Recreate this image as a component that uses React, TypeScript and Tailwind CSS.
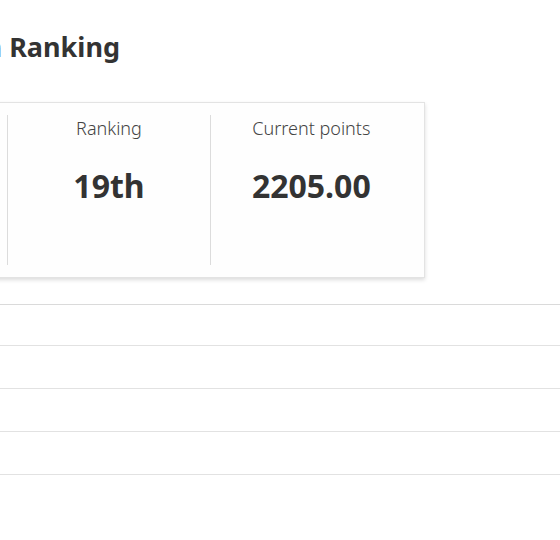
import React from 'react';

const stats = [
  { label: 'Points needed', value: '145.00' },
  { label: 'Ranking', value: '19th' },
  { label: 'Current points', value: '2205.00' },
];

const rows = [0, 1, 2, 3];

const App: React.FC = () => {
  return (
    <div className="min-h-[540px] w-[560px] overflow-hidden bg-white font-['Noto_Sans',sans-serif] text-[#333]">
      {/* Title, scrolled partly off the left edge */}
      <div className="flex w-[120px] justify-end whitespace-nowrap pt-[29px]">
        <h1 className="text-[27px] font-bold leading-[36px] text-[#333]">Season Ranking</h1>
      </div>

      {/* Stat card */}
      <div className="ml-[-208px] mt-[37px] flex w-[633px] border border-[#e3e3e3] bg-[#fefefe] px-[12px] py-[12px] shadow-[0_2px_4px_rgba(0,0,0,0.14)]">
        {stats.map((s, i) => (
          <div
            key={s.label}
            className={`flex h-[150px] w-[203px] flex-col items-center ${i > 0 ? 'border-l border-[#dcdcdc]' : ''}`}
          >
            <p className="text-[18px] font-light leading-[26px] text-[#444]">{s.label}</p>
            <p className="mt-[25px] text-[32px] font-bold leading-[40px] text-[#333]">{s.value}</p>
          </div>
        ))}
      </div>

      {/* Table rows */}
      <div className="ml-[-208px] mt-[26px] w-[800px] border-t border-[#dadada]">
        {rows.map((r) => (
          <div key={r} className={`${r === 0 ? 'h-[41px]' : 'h-[43px]'} border-b border-[#e2e2e2]`} />
        ))}
      </div>
    </div>
  );
};

export default App;
